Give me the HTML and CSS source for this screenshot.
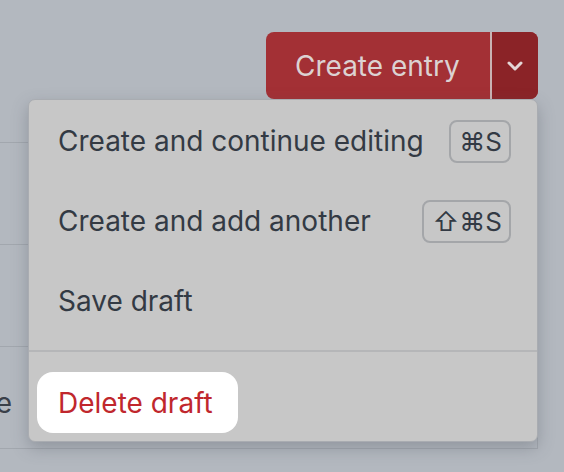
FILE: index.html
```html
<!DOCTYPE html>
<html>
<head>
<meta charset="utf-8">
<link rel="stylesheet" href="styles.css">
</head>
<body>
<div class="page">
  <div class="header">
    <div class="split-btn">
      <span class="btn-main">Create entry</span>
      <span class="btn-toggle">
        <svg width="18" height="12" viewBox="0 0 18 12"><path d="M3 3 L9 9 L15 3" fill="none" stroke="#e4d6d6" stroke-width="3" stroke-linecap="round" stroke-linejoin="round"/></svg>
      </span>
    </div>
  </div>
  <div class="table">
    <div class="row"></div>
    <div class="row"></div>
    <div class="row"><div class="cell">Type</div></div>
  </div>
  <div class="menu">
    <div class="item"><span>Create and continue editing</span><kbd class="kbd">⌘S</kbd></div>
    <div class="item"><span>Create and add another</span><kbd class="kbd">⇧⌘S</kbd></div>
    <div class="item"><span>Save draft</span></div>
    <div class="sep"></div>
    <div class="item danger"><span>Delete draft</span></div>
  </div>
</div>
</body>
</html>
```
FILE: styles.css
```css
* { box-sizing: border-box; }
html, body { margin: 0; padding: 0; }
body {
  background: #b3b8bf;
  font-family: Inter, "Noto Sans", sans-serif;
  width: 564px;
  height: 472px;
  overflow: hidden;
}
.page {
  position: relative;
  width: 564px;
  height: 472px;
}
.header {
  display: flex;
  justify-content: flex-end;
  padding: 32px 26px 0 0;
}
.split-btn {
  display: flex;
  height: 67px;
  border-radius: 8px;
  overflow: hidden;
  background: #a33035;
}
.btn-main {
  display: flex;
  align-items: center;
  padding: 0 0 0 29px;
  width: 226px;
  color: #dcd2d2;
  font-size: 28px;
  border-right: 2px solid #c9b2b3;
}
.btn-toggle {
  width: 46px;
  display: flex;
  align-items: center;
  justify-content: center;
  background: #8b2327;
}
.table {
  margin-top: 43px;
  margin-left: -20px;
  width: 558px;
  border-top: 1px solid #a2a7ae;
  border-right: 1px solid #a2a7ae;
}
.row {
  height: 102px;
  border-bottom: 1px solid #a2a7ae;
  display: flex;
  align-items: center;
}
.cell {
  width: 32px;
  display: flex;
  justify-content: flex-end;
  white-space: nowrap;
  font-size: 28px;
  color: #3a4049;
  padding-top: 10px;
}
.menu {
  position: absolute;
  left: 28px;
  top: 99px;
  width: 510px;
  height: 343px;
  background: #c7c7c7;
  border: 1px solid #a9acb1;
  border-radius: 7px;
  box-shadow: 0 6px 16px rgba(80, 86, 96, 0.35);
  padding: 1px 8px 0 8px;
}
.item {
  height: 80px;
  display: flex;
  align-items: center;
  justify-content: space-between;
  padding: 0 18px 0 21px;
  font-size: 28px;
  color: #333a44;
}
.kbd {
  font-family: Inter, "Noto Sans", "DejaVu Sans", sans-serif;
  font-size: 26px;
  color: #333a44;
  border: 2px solid #a4a6a9;
  border-radius: 8px;
  height: 43px;
  padding: 0 7px 0 8px;
  display: flex;
  align-items: center;
}
.sep {
  height: 2px;
  background: #b5b6b8;
  margin: 9px -8px 20px -8px;
}
.item.danger {
  height: 61px;
  width: 201px;
  background: #ffffff;
  border-radius: 16px;
  color: #c0272d;
}
```
